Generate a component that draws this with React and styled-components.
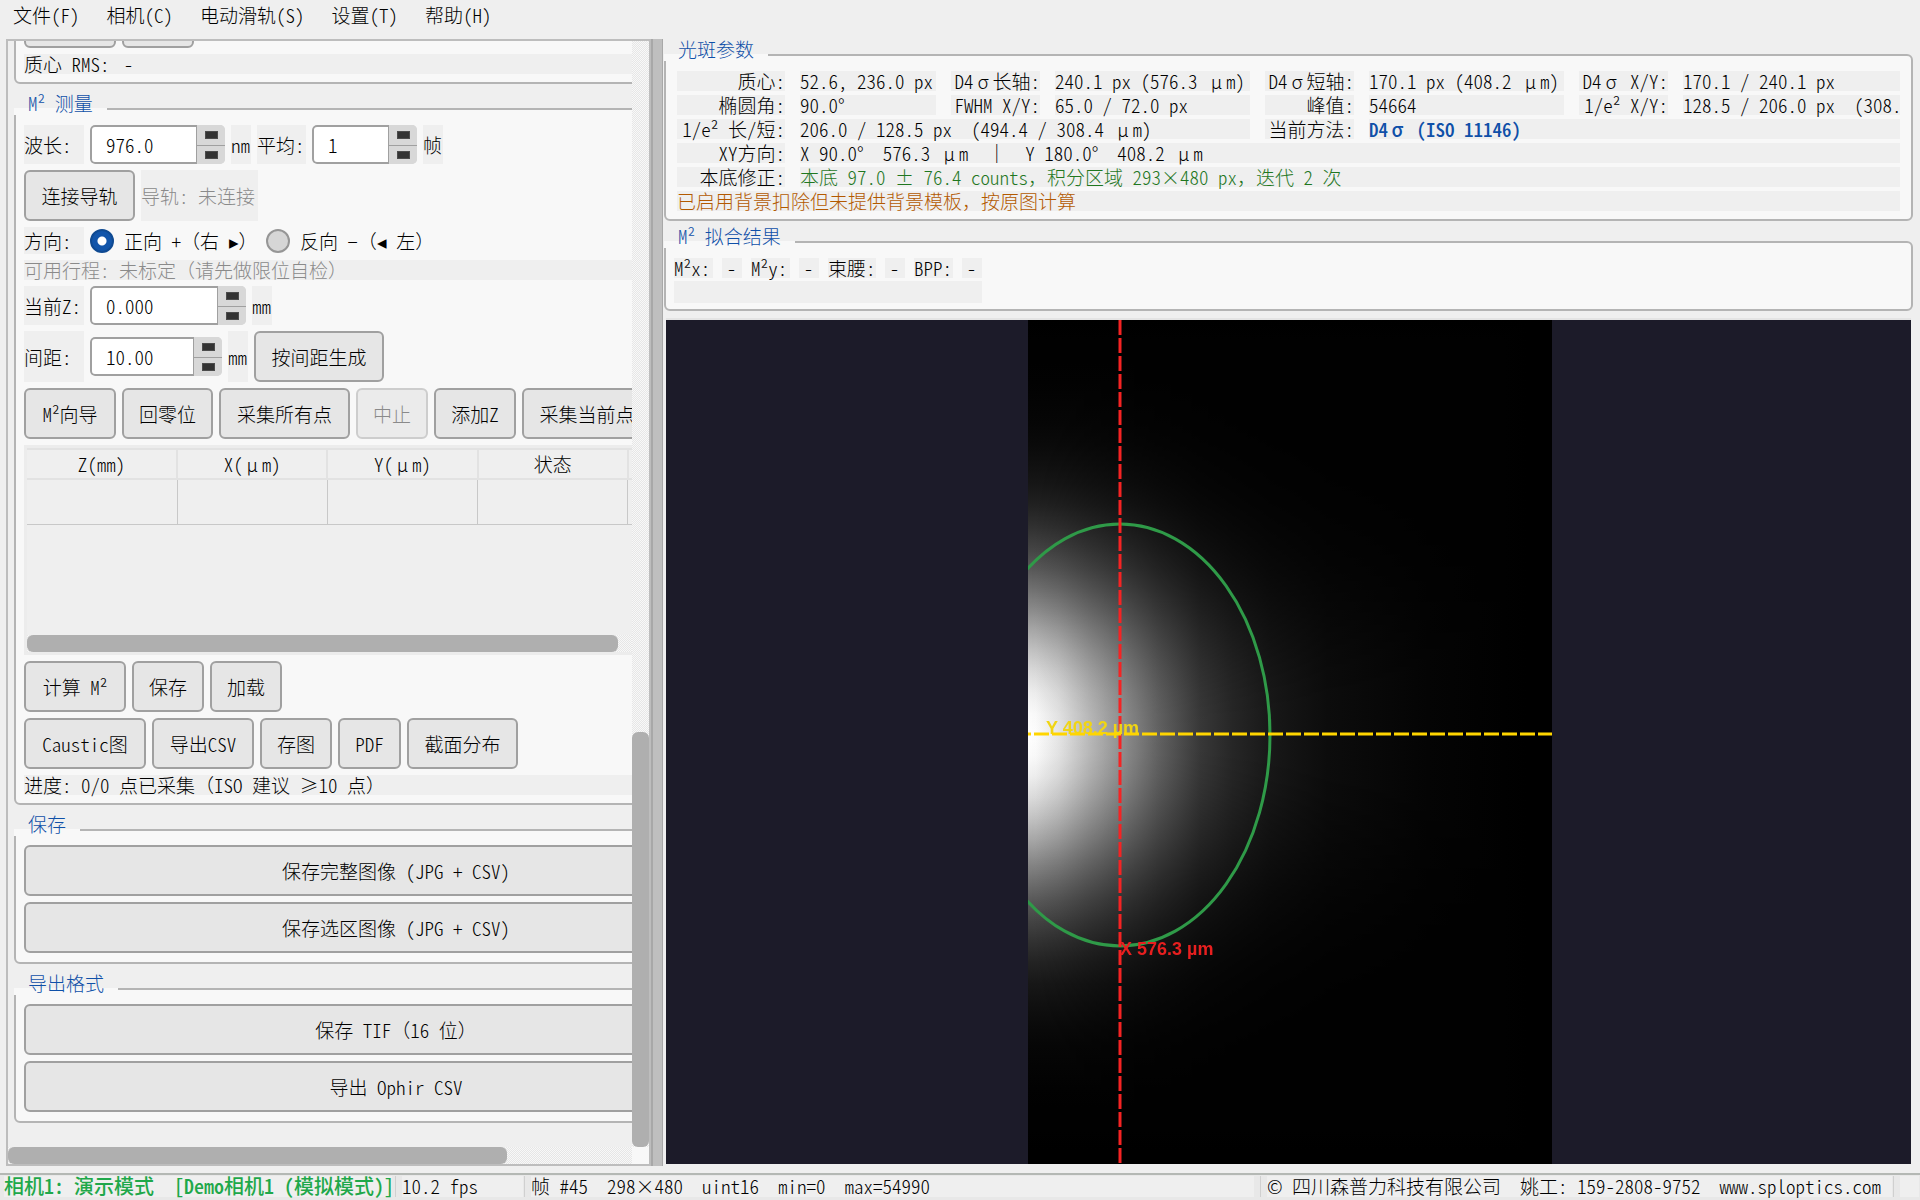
import React from "react";
import styled, { createGlobalStyle } from "styled-components";

const Global = createGlobalStyle`
  *, *::before, *::after { box-sizing: border-box; }
  html, body, #root { height: 100%; margin: 0; }
  body {
    background: #efefef;
    color: #000;
    font-family: "Noto Sans CJK SC", "Liberation Serif", sans-serif;
    font-size: 19px;
    font-weight: 300;
    font-feature-settings: "hwid";
    line-height: 20px;
    overflow: hidden;
  }
  button, input { font: inherit; font-feature-settings: inherit; color: inherit; }
`;

const checker = `repeating-conic-gradient(#f8f8f8 0% 25%, #e6e6e6 0% 50%) 0 0 / 2px 2px`;

const Window = styled.div`
  display: flex;
  flex-direction: column;
  height: 100vh;
`;

const MenuBar = styled.nav`
  display: flex;
  flex: none;
  gap: 27px;
  height: 39px;
  padding: 5px 13px;
`;

const MenuItem = styled.button`
  border: 0;
  background: none;
  padding: 0;
  height: 20px;
  white-space: pre;
`;

const Main = styled.main`
  display: flex;
  flex: 1;
  min-height: 0;
  padding-left: 6px;
`;

const Side = styled.section`
  display: grid;
  grid-template-columns: minmax(0, 1fr) 17px;
  grid-template-rows: minmax(0, 1fr) 17px;
  flex: none;
  width: 34%;
  max-width: 645px;
  border: 2px solid #bdbdbd;
  background: #f8f8f8;
`;

const SideView = styled.div`
  overflow: hidden;
  background: #efefef;
  padding: 0 6px;
  display: flex;
  flex-direction: column;
  justify-content: flex-end;
`;

const SideContent = styled.div`
  display: flex;
  flex-direction: column;
  width: 764px;
  padding-bottom: 24px;
`;

const Track = styled.div`
  background: ${checker};
  display: flex;
  flex-direction: ${(p) => (p.$vertical ? "column" : "row")};
  justify-content: ${(p) => (p.$end ? "flex-end" : "flex-start")};
`;

const Thumb = styled.div`
  background: #afafaf;
  border-radius: 6px;
  flex: none;
  width: ${(p) => p.$w || "100%"};
  height: ${(p) => p.$h || "100%"};
`;

const Splitter = styled.div`
  flex: none;
  width: 12px;
  background: #bfbfbf;
  border-left: 2px solid #a8a8a8;
  border-right: 1px solid #a8a8a8;
`;

const Group = styled.section`
  position: relative;
  flex: none;
  margin-top: ${(p) => (p.$top === undefined ? 24 : p.$top)}px;
  border: 2px solid #b4b4b4;
  border-radius: 6px;
  background: #f8f8f8;
  padding: ${(p) => p.$pad || "14px 8px 9px"};
`;

const GroupTitle = styled.h2`
  position: absolute;
  left: -2px;
  top: -17px;
  margin: 0;
  height: 22px;
  padding: 0 14px;
  font: inherit;
  line-height: 20px;
  color: #0f50a8;
  white-space: pre;
  background: linear-gradient(transparent 15px, #f8f8f8 15px);
`;

const Stack = styled.div`
  display: flex;
  flex-direction: column;
  gap: 6px;
`;

const Row = styled.div`
  display: flex;
  align-items: stretch;
  gap: 6px;
  min-height: 27px;
`;

const Text = styled.span`
  display: flex;
  align-items: center;
  flex: none;
  min-height: 20px;
  width: ${(p) => (p.$w ? `${p.$w}px` : "auto")};
  background: #efefef;
  color: ${(p) => p.$color || "inherit"};
  white-space: pre;
`;

const LabelText = styled(Text).attrs({ as: "label" })``;

const Wide = styled.span`
  font-feature-settings: "fwid";
`;

const FullCell = styled.span`
  display: inline-block;
  width: 19px;
  text-align: center;
`;

const Button = styled.button`
  flex: none;
  height: 51px;
  width: ${(p) => (p.$w ? `${p.$w}px` : "auto")};
  border: 2px solid #a0a0a0;
  border-radius: 6px;
  background: #e6e6e6;
  padding: 0;
  white-space: pre;
  &:disabled { border-color: #cdcdcd; background: #ebebeb; color: #8a8a8a; }
`;

const SpinBox = styled.span`
  display: flex;
  flex: none;
  align-self: center;
  width: ${(p) => p.$w}px;
  height: 39px;
  border-radius: 5px;
  overflow: hidden;
  background: #d8d8d8;
`;

const SpinInput = styled.input`
  flex: 1;
  min-width: 0;
  border: 2px solid #a0a0a0;
  border-right-width: 1px;
  border-radius: 5px 0 0 5px;
  background: #fff;
  padding: 0 14px;
  outline: 0;
`;

const SpinButtons = styled.span`
  display: grid;
  width: 28px;
  grid-template-rows: 1fr 1fr;
`;

const SpinButton = styled.button`
  display: grid;
  place-items: center;
  border: 0;
  padding: 0;
  background: #d8d8d8;
  & + & { border-top: 1px solid #a0a0a0; }
  &::before {
    content: "";
    width: 13px;
    height: 8px;
    background: #333;
    border: 1px solid #4c4c4c;
  }
`;

const Radio = styled.input`
  appearance: none;
  flex: none;
  margin: 0;
  width: 24px;
  height: 24px;
  border: 2px solid #969696;
  border-radius: 50%;
  background: #d6d6d6;
  &:checked {
    border-color: #0f4a92;
    background: radial-gradient(circle, #fff 4px, #1255aa 5px);
  }
`;

const RadioLabel = styled.label`
  display: flex;
  align-items: center;
  gap: 10px;
  white-space: pre;
  width: ${(p) => (p.$w ? `${p.$w}px` : "auto")};
`;

const TableFrame = styled.div`
  display: flex;
  flex-direction: column;
  height: 210px;
  border: 1px solid #ececec;
  border-width: 3px 1px 3px 3px;
  background: #efefef;
`;

const Table = styled.table`
  border-collapse: collapse;
  table-layout: fixed;
  width: 752px;
`;

const Th = styled.th`
  width: 150px;
  height: 30px;
  padding: 0;
  font-weight: inherit;
  border: 2px solid #e2e2e2;
  border-left: 0;
`;

const Td = styled.td`
  height: 45px;
  padding: 0;
  border-right: 1px solid #c8c8c8;
  border-bottom: 1px solid #c8c8c8;
`;

const TableTrack = styled(Track)`
  height: 17px;
  margin-top: auto;
`;

const Right = styled.section`
  display: flex;
  flex-direction: column;
  flex: 1;
  min-width: 0;
  padding: 0 7px 0 1px;
`;

const Params = styled.div`
  display: grid;
  grid-template-columns: 108px 136px 89px 195px 89px 195px 89px minmax(0, 1fr);
  column-gap: 15px;
  row-gap: 4px;
`;

const Cell = styled.span`
  grid-column: span ${(p) => p.$span || 1};
  height: 20px;
  background: #efefef;
  text-align: ${(p) => (p.$label ? "right" : "left")};
  color: ${(p) => p.$color || "inherit"};
  font-weight: ${(p) => (p.$bold ? 500 : "inherit")};
  white-space: pre;
`;

const FitGrid = styled.div`
  display: grid;
  width: max-content;
  grid-template-columns: 39px 20px 39px 20px 48px 20px 39px 20px;
  column-gap: 9px;
  row-gap: 3px;
`;

const FitNote = styled.div`
  grid-column: 1 / -1;
  height: 22px;
  background: #efefef;
`;

const Canvas = styled.div`
  flex: 1;
  min-height: 0;
  margin: 7px 2px 2px;
  padding-left: 3px;
  border-top: 2px solid #e4e4e4;
  background: #1c1b29;
  display: flex;
  justify-content: center;
`;

const BeamSvg = styled.svg`
  display: block;
  height: 100%;
  isolation: isolate;
  font-family: "Liberation Sans", sans-serif;
  font-size: 18px;
  font-weight: 700;
`;

const Falloff = styled.rect`
  mix-blend-mode: multiply;
`;

const StatusBar = styled.footer`
  display: flex;
  flex: none;
  margin-top: 7px;
  height: 27px;
  border-top: 2px solid #b4b8b4;
  background: #e8e8e8;
  padding: 1px 0 3px 4px;
`;

const Status = styled.span`
  display: block;
  flex: ${(p) => (p.$grow ? "1 1 0" : "none")};
  width: ${(p) => (p.$w ? `${p.$w}px` : "auto")};
  margin-right: ${(p) => p.$after || 6}px;
  background: #efefef;
  line-height: 20px;
  font-size: ${(p) => (p.$strong ? 20 : 19)}px;
  font-weight: ${(p) => (p.$strong ? 500 : "inherit")};
  color: ${(p) => (p.$strong ? "#1fa84a" : "inherit")};
  white-space: pre;
`;

const StatusDivider = styled.span`
  flex: none;
  width: 1px;
  margin-right: 6px;
  background: #d0d0d0;
`;

const blue = "#0f50a8";
const gray = "#8a8a8a";

/* Greek letters and Chinese punctuation take a full cell, everything else in Latin takes half of one. */
function Mixed({ children }) {
  return (
    <span>
      {children.split(/([σμ]|[（），]+)/).map((part, i) => {
        if (i % 2 === 0) return part;
        return /[σμ]/.test(part) ? <FullCell key={i}>{part}</FullCell> : <Wide key={i}>{part}</Wide>;
      })}
    </span>
  );
}

function Dash() {
  return <FullCell>-</FullCell>;
}

function Spin({ id, value, w }) {
  return (
    <SpinBox $w={w}>
      <SpinInput id={id} defaultValue={value} />
      <SpinButtons>
        <SpinButton aria-label="+" />
        <SpinButton aria-label="-" />
      </SpinButtons>
    </SpinBox>
  );
}

const grayTone = (v) => `rgb(${v},${v},${v})`;

const across = [
  [0, 255], [8, 252], [30, 230], [60, 187], [92, 146], [130, 98], [172, 56],
  [205, 38], [242, 24], [300, 12], [400, 4], [500, 0],
].map(([x, v]) => ({ at: x / 500, color: grayTone(v) }));

const down = Array.from({ length: 41 }, (_, i) => {
  const d = (i / 20 - 1) * 415;
  return { at: i / 40, color: grayTone(Math.round(255 * Math.exp((-d * d) / (2 * 114 * 114)))) };
});

function Stops({ list }) {
  return list.map((s) => <stop key={s.at} offset={s.at} stopColor={s.color} />);
}

function Beam() {
  return (
    <BeamSvg viewBox="0 0 524 844" role="img">
      <defs>
        <linearGradient id="across" gradientUnits="userSpaceOnUse" x1="0" y1="0" x2="500" y2="0">
          <Stops list={across} />
        </linearGradient>
        <linearGradient id="down" gradientUnits="userSpaceOnUse" x1="0" y1="0" x2="0" y2="830">
          <Stops list={down} />
        </linearGradient>
      </defs>
      <rect width="524" height="844" fill="url(#across)" />
      <Falloff width="524" height="844" fill="url(#down)" />
      <ellipse cx="92" cy="415" rx="150" ry="211" fill="none" stroke="#2f9a48" strokeWidth="3" />
      <path d="M92 0V844" stroke="#f52323" strokeWidth="3" strokeDasharray="15 3" />
      <text x="18" y="414" fill="#f0d514">Y 408.2 µm</text>
      <path d="M0 414H524" stroke="#ffd500" strokeWidth="3" strokeDasharray="15 3" strokeDashoffset="12" />
      <text x="92" y="635" fill="#e81f1f">X 576.3 µm</text>
    </BeamSvg>
  );
}

export default function App() {
  return (
    <Window>
      <Global />
      <MenuBar>
        {["文件(F)", "相机(C)", "电动滑轨(S)", "设置(T)", "帮助(H)"].map((m) => (
          <MenuItem key={m}>{m}</MenuItem>
        ))}
      </MenuBar>
      <Main>
        <Side>
          <SideView>
            <SideContent>
              <Group $top={0} $pad="0 8px 8px">
                <Stack>
                  <Row>
                    <Button $w={92} aria-label="开始" />
                    <Button $w={72} aria-label="停止" />
                  </Row>
                  <Text>质心 RMS: <Dash /></Text>
                </Stack>
              </Group>
              <Group $pad="15px 8px 8px">
                <GroupTitle>M² 测量</GroupTitle>
                <Stack>
                  <Row>
                    <LabelText htmlFor="wave" $w={60}>波长:</LabelText>
                    <Spin id="wave" value="976.0" w={135} />
                    <Text $w={20}>nm</Text>
                    <LabelText htmlFor="avg" $w={49}>平均:</LabelText>
                    <Spin id="avg" value="1" w={105} />
                    <Text $w={20}>帧</Text>
                  </Row>
                  <Row>
                    <Button $w={111}>连接导轨</Button>
                    <Text $w={117} $color={gray}>导轨: 未连接</Text>
                  </Row>
                  <Row>
                    <Text $w={60}>方向:</Text>
                    <RadioLabel $w={170}>
                      <Radio type="radio" name="dir" defaultChecked />
                      <Mixed>正向 +（右 ▸）</Mixed>
                    </RadioLabel>
                    <RadioLabel>
                      <Radio type="radio" name="dir" />
                      <Mixed>反向 −（◂ 左）</Mixed>
                    </RadioLabel>
                  </Row>
                  <Text $color={gray}><Mixed>可用行程: 未标定（请先做限位自检）</Mixed></Text>
                  <Row>
                    <LabelText htmlFor="z" $w={60}>当前Z:</LabelText>
                    <Spin id="z" value="0.000" w={156} />
                    <Text $w={20}>mm</Text>
                  </Row>
                  <Row>
                    <LabelText htmlFor="step" $w={60}>间距:</LabelText>
                    <Spin id="step" value="10.00" w={132} />
                    <Text $w={20}>mm</Text>
                    <Button $w={130}>按间距生成</Button>
                  </Row>
                  <Row>
                    <Button $w={92}>M²向导</Button>
                    <Button $w={91}>回零位</Button>
                    <Button $w={131}>采集所有点</Button>
                    <Button $w={72} disabled>中止</Button>
                    <Button $w={82}>添加Z</Button>
                    <Button $w={130}>采集当前点</Button>
                  </Row>
                  <TableFrame>
                    <Table>
                      <thead>
                        <tr>
                          <Th>Z(mm)</Th>
                          <Th><Mixed>X(μm)</Mixed></Th>
                          <Th><Mixed>Y(μm)</Mixed></Th>
                          <Th>状态</Th>
                          <Th />
                        </tr>
                      </thead>
                      <tbody>
                        <tr><Td /><Td /><Td /><Td /><Td /></tr>
                      </tbody>
                    </Table>
                    <TableTrack>
                      <Thumb $w="591px" />
                    </TableTrack>
                  </TableFrame>
                  <Row>
                    <Button $w={102}>计算 M²</Button>
                    <Button $w={72}>保存</Button>
                    <Button $w={72}>加载</Button>
                  </Row>
                  <Row>
                    <Button $w={122}>Caustic图</Button>
                    <Button $w={102}>导出CSV</Button>
                    <Button $w={72}>存图</Button>
                    <Button $w={63}>PDF</Button>
                    <Button $w={111}>截面分布</Button>
                  </Row>
                  <Text><Mixed>进度: 0/0 点已采集（ISO 建议 ≥10 点）</Mixed></Text>
                </Stack>
              </Group>
              <Group>
                <GroupTitle>保存</GroupTitle>
                <Stack>
                  <Button>保存完整图像 (JPG + CSV)</Button>
                  <Button>保存选区图像 (JPG + CSV)</Button>
                </Stack>
              </Group>
              <Group>
                <GroupTitle>导出格式</GroupTitle>
                <Stack>
                  <Button><Mixed>保存 TIF（16 位）</Mixed></Button>
                  <Button>导出 Ophir CSV</Button>
                </Stack>
              </Group>
            </SideContent>
          </SideView>
          <Track $vertical $end>
            <Thumb $h="415px" />
          </Track>
          <Track>
            <Thumb $w="80%" />
          </Track>
        </Side>
        <Splitter />
        <Right>
          <Group $top={15} $pad="15px 11px 8px">
            <GroupTitle>光斑参数</GroupTitle>
            <Params>
              <Cell $label>质心:</Cell>
              <Cell>52.6, 236.0 px</Cell>
              <Cell $label><Mixed>D4σ长轴:</Mixed></Cell>
              <Cell><Mixed>240.1 px (576.3 μm)</Mixed></Cell>
              <Cell $label><Mixed>D4σ短轴:</Mixed></Cell>
              <Cell><Mixed>170.1 px (408.2 μm)</Mixed></Cell>
              <Cell $label><Mixed>D4σ X/Y:</Mixed></Cell>
              <Cell>170.1 / 240.1 px</Cell>
              <Cell $label>椭圆角:</Cell>
              <Cell>90.0°</Cell>
              <Cell $label>FWHM X/Y:</Cell>
              <Cell>65.0 / 72.0 px</Cell>
              <Cell $label>峰值:</Cell>
              <Cell>54664</Cell>
              <Cell $label>1/e² X/Y:</Cell>
              <Cell>128.5 / 206.0 px  (308.</Cell>
              <Cell $label>1/e² 长/短:</Cell>
              <Cell $span={3}><Mixed>206.0 / 128.5 px  (494.4 / 308.4 μm)</Mixed></Cell>
              <Cell $label>当前方法:</Cell>
              <Cell $span={3} $bold $color={blue}><Mixed>D4σ (ISO 11146)</Mixed></Cell>
              <Cell $label>XY方向:</Cell>
              <Cell $span={7}><Mixed>X 90.0°  576.3 μm  │  Y 180.0°  408.2 μm</Mixed></Cell>
              <Cell $label>本底修正:</Cell>
              <Cell $span={7} $color="#1f771f"><Mixed>本底 97.0 ± 76.4 counts，积分区域 293×480 px，迭代 2 次</Mixed></Cell>
              <Cell $span={8} $color="#b35900"><Mixed>已启用背景扣除但未提供背景模板，按原图计算</Mixed></Cell>
            </Params>
          </Group>
          <Group $top={20} $pad="15px 8px 6px">
            <GroupTitle>M² 拟合结果</GroupTitle>
            <FitGrid>
              <Cell>M²x:</Cell><Cell><Dash /></Cell>
              <Cell>M²y:</Cell><Cell><Dash /></Cell>
              <Cell>束腰:</Cell><Cell><Dash /></Cell>
              <Cell>BPP:</Cell><Cell><Dash /></Cell>
              <FitNote />
            </FitGrid>
          </Group>
          <Canvas>
            <Beam />
          </Canvas>
        </Right>
      </Main>
      <StatusBar>
        <Status $w={388} $after={3} $strong>相机1: 演示模式  [Demo相机1 (模拟模式)]</Status>
        <StatusDivider />
        <Status $w={121} $after={1}>10.2 fps</Status>
        <StatusDivider />
        <Status $grow>帧 #45  298×480  uint16  min=0  max=54990</Status>
        <StatusDivider />
        <Status $w={625} $after={1}>© 四川森普力科技有限公司  姚工: 159-2808-9752  www.sploptics.com</Status>
        <StatusDivider />
        <Status $w={19} $after={1} />
      </StatusBar>
    </Window>
  );
}
